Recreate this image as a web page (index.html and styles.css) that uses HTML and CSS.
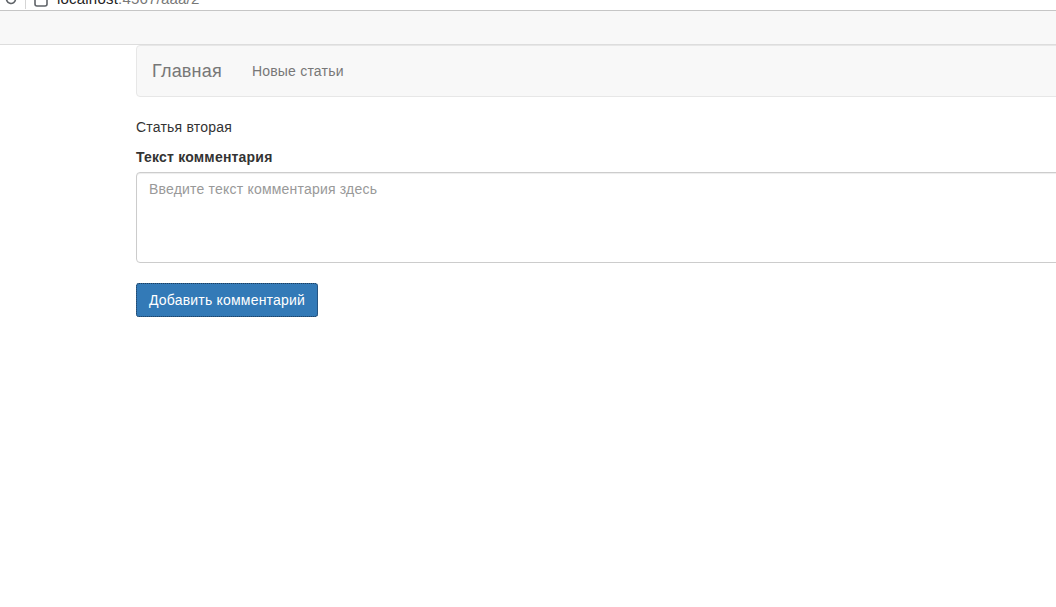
FILE: index.html
```html
<!DOCTYPE html>
<html lang="ru">
<head>
  <meta charset="UTF-8">
  <title>Статья вторая</title>
  <link rel="stylesheet" href="styles.css">
</head>
<body>

  <!-- адресная строка браузера (обрезана) -->
  <div class="chrome">
    <div class="chrome-row">
      <svg class="reload" width="14" height="14" viewBox="0 0 14 14">
        <path d="M11.5 7a4.5 4.5 0 1 1-1.3-3.2" fill="none" stroke="#5f6368" stroke-width="1.6"/>
      </svg>
      <span class="sep"></span>
      <svg class="page-icon" width="14" height="16" viewBox="0 0 14 16">
        <rect x="1" y="1" width="12" height="14" rx="2" fill="none" stroke="#5f6368" stroke-width="1.6"/>
      </svg>
      <span class="url"><span class="host">localhost</span>:4567/aaa/2</span>
    </div>
  </div>
  <div class="toolbar"></div>

  <div class="container">
    <nav class="navbar">
      <a class="brand" href="#">Главная</a>
      <a class="nav-link" href="#">Новые статьи</a>
    </nav>

    <p class="title">Статья вторая</p>

    <form class="comment-form">
      <div class="form-group">
        <label for="comment">Текст комментария</label>
        <textarea id="comment" class="form-control" rows="4" placeholder="Введите текст комментария здесь"></textarea>
      </div>
      <button type="submit" class="btn">Добавить комментарий</button>
    </form>
  </div>

</body>
</html>
```

FILE: styles.css
```css
body {
  margin: 0;
  font-family: "Liberation Sans", Arial, sans-serif;
  font-size: 14px;
  line-height: 20px;
  color: #333;
  background: #fff;
  letter-spacing: 0.2px;
  overflow: hidden;
}
.chrome {
  height: 10px;
  overflow: hidden;
  background: #fff;
  border-bottom: 1px solid #c6c6c6;
}
.chrome-row {
  display: flex;
  align-items: center;
  height: 20px;
  margin-top: -11px;
  padding-left: 4px;
}
.sep {
  width: 1px;
  height: 20px;
  background: #d5d5d5;
  margin: 0 8px 0 7px;
}
.page-icon {
  margin-right: 9px;
}
.url {
  font-size: 15px;
  color: #777;
}
.url .host {
  color: #222;
}
.toolbar {
  height: 33px;
  background: #f8f8f8;
  border-bottom: 1px solid #ddd;
}
.container {
  padding-left: 136px;
  width: 1170px;
}
.navbar {
  display: flex;
  align-items: center;
  height: 50px;
  background: #f8f8f8;
  border: 1px solid #e7e7e7;
  border-radius: 4px;
  margin-bottom: 20px;
}
.navbar a {
  text-decoration: none;
  color: #777;
}
.brand {
  font-size: 18px;
  padding: 15px;
  line-height: 20px;
}
.nav-link {
  padding: 15px;
}
.title {
  margin: 0 0 10px;
}
.form-group {
  margin-bottom: 20px;
}
label {
  display: block;
  font-weight: bold;
  margin-bottom: 5px;
}
.form-control {
  display: block;
  box-sizing: border-box;
  width: 100%;
  height: 91px;
  padding: 6px 12px;
  font-family: inherit;
  font-size: 14px;
  line-height: 20px;
  letter-spacing: inherit;
  color: #555;
  border: 1px solid #ccc;
  border-radius: 4px;
  box-shadow: inset 0 1px 1px rgba(0, 0, 0, .075);
  resize: vertical;
}
.form-control::placeholder {
  color: #999;
}
.btn {
  height: 34px;
  padding: 6px 12px;
  font-family: inherit;
  font-size: 14px;
  line-height: 20px;
  letter-spacing: inherit;
  color: #fff;
  background: #337ab7;
  border: 1px solid #2e6da4;
  border-radius: 3px;
  outline: 1px dotted #1f3f5f;
  outline-offset: -1px;
  cursor: pointer;
}
```
